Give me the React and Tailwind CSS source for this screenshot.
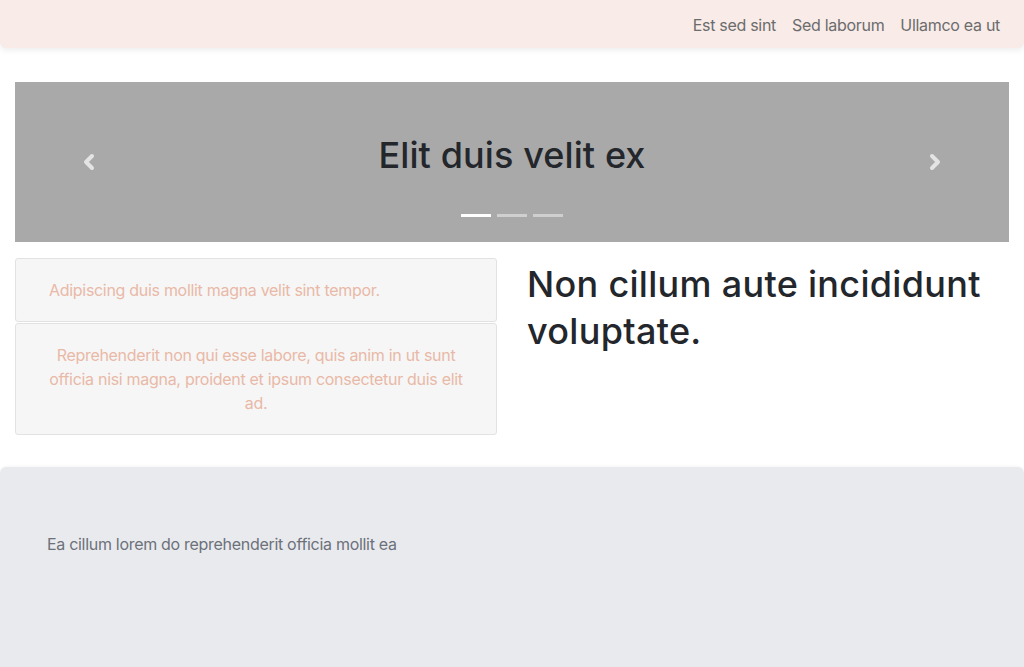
import { ChevronLeft, ChevronRight } from "lucide-react";

export default function App() {
  const links = ["Est sed sint", "Sed laborum", "Ullamco ea ut"];

  return (
    <div className="min-h-[667px] bg-white font-['Inter','Noto_Sans',sans-serif] flex flex-col">
      {/* Navbar */}
      <nav className="h-12 bg-[#f8ebe8] rounded-b-md shadow-[0_2px_6px_rgba(0,0,0,0.08)] flex items-center justify-end gap-4 px-6 pt-[2px]">
        {links.map((l) => (
          <a key={l} className="text-[16px] tracking-[-0.3px] text-[#6c6c6c]">
            {l}
          </a>
        ))}
      </nav>

      {/* Carousel */}
      <section className="mx-[15px] mt-[34px] h-[160px] bg-[#a9a9a9] flex flex-col items-center">
        <div className="flex-1 w-full flex items-center justify-between px-[62px] pt-[24px]">
          <ChevronLeft className="w-6 h-6 mt-[3px] text-[#e4e4e4]" strokeWidth={4} />
          <h1 className="text-[36px] font-medium tracking-[0.1px] text-[#23262b] -mt-[10px]">Elit duis velit ex</h1>
          <ChevronRight className="w-6 h-6 mt-[3px] text-[#e4e4e4]" strokeWidth={4} />
        </div>
        <div className="flex gap-[6px] mb-[25px]">
          <span className="w-[30px] h-[3px] bg-white" />
          <span className="w-[30px] h-[3px] bg-[#cfcfcf]" />
          <span className="w-[30px] h-[3px] bg-[#cfcfcf]" />
        </div>
      </section>

      {/* Content */}
      <section className="mx-[15px] mt-4 grid grid-cols-2 gap-[30px]">
        <div className="flex flex-col gap-[1px] tracking-[-0.3px]">
          <div className="bg-[#f6f6f6] border border-[#e2e2e2] rounded-[3px] py-[19px] px-[33px] text-[16px] leading-6 text-[#e9b9a7]">
            Adipiscing duis mollit magna velit sint tempor.
          </div>
          <div className="bg-[#f6f6f6] border border-[#e2e2e2] rounded-[3px] py-[19px] px-[33px] text-[16px] leading-6 text-[#e9b9a7] text-center">
            Reprehenderit non qui esse labore, quis anim in ut sunt officia nisi magna, proident et ipsum consectetur duis elit ad.
          </div>
        </div>
        <h2 className="text-[36px] leading-[47px] font-medium tracking-[0.3px] text-[#23262b] pt-[3px]">
          Non cillum aute incididunt voluptate.
        </h2>
      </section>

      {/* Footer */}
      <footer className="mt-[32px] flex-1 bg-[#e9eaee] rounded-t-md shadow-[0_-1px_3px_rgba(0,0,0,0.04)] px-[47px] pt-[65px] pb-[100px]">
        <p className="text-[16px] tracking-[-0.3px] text-[#6c717a]">Ea cillum lorem do reprehenderit officia mollit ea</p>
      </footer>
    </div>
  );
}
